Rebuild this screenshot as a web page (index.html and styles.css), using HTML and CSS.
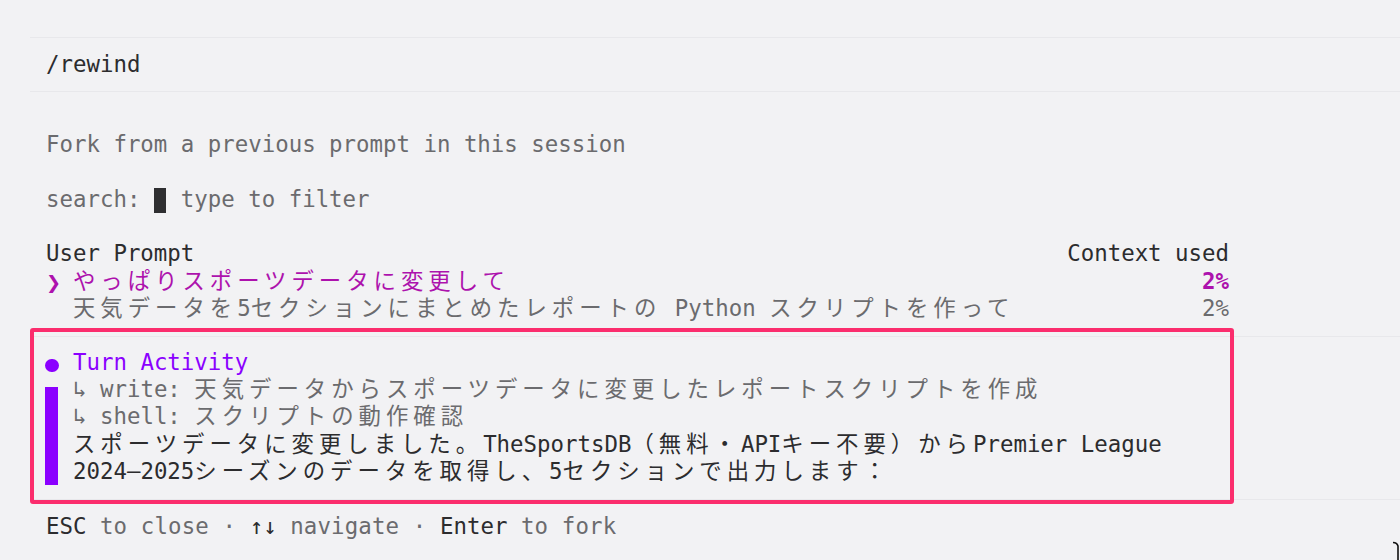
FILE: index.html
```html
<!DOCTYPE html>
<html lang="ja">
<head>
<meta charset="utf-8">
<title>/rewind</title>
<link rel="stylesheet" href="styles.css">
</head>
<body>
<main class="term">
  <section class="cmd">/rewind</section>

  <section class="picker">
    <p class="title muted">Fork from a previous prompt in this session</p>
    <p class="search muted">search: <span class="cursor"></span> type to filter</p>

    <div class="table">
      <div class="row head">
        <span>User Prompt</span>
        <span>Context used</span>
      </div>
      <div class="row sel">
        <span><span class="caret">❯</span> <span class="w">やっぱりスポーツデータに変更して</span></span>
        <span class="pct">2%</span>
      </div>
      <div class="row muted">
        <span class="indent"><span class="w">天気データを</span>5<span class="w">セクションにまとめたレポートの</span> Python <span class="w">スクリプトを作って</span></span>
        <span>2%</span>
      </div>
    </div>
  </section>

  <section class="turn">
    <div class="frame"></div>
    <div class="turn-body">
      <span class="dot"></span>
      <span class="turn-title">Turn Activity</span>
      <span class="bar"></span>
      <span class="line muted">↳ write: <span class="w">天気データからスポーツデータに変更したレポートスクリプトを作成</span></span>
      <span class="line muted">↳ shell: <span class="w">スクリプトの動作確認</span></span>
      <span class="line"><span class="w">スポーツデータに変更しました。</span>TheSportsDB<span class="w">（無料・</span>API<span class="w">キー不要）から</span>Premier League</span>
      <span class="line">2024–2025<span class="w">シーズンのデータを取得し、</span>5<span class="w">セクションで出力します：</span></span>
    </div>
  </section>

  <footer class="keys"><span class="k">ESC</span> <span class="muted">to close ·</span> <span class="k">↑↓</span> <span class="muted">navigate ·</span> <span class="k">Enter</span> <span class="muted">to fork</span></footer>
</main>
<svg class="pointer" width="10" height="20" viewBox="0 0 10 20" aria-hidden="true">
  <path d="M1 2.5 Q5 2.5 6 6 V20" fill="none" stroke="#111" stroke-width="1.6"/>
</svg>
</body>
</html>
```

FILE: styles.css
```css
html, body {
  margin: 0;
  padding: 0;
  background: #f2f2f4;
}

body {
  position: relative;
  width: 1400px;
  height: 560px;
  overflow: hidden;
  font-family: "DejaVu Sans Mono", "Noto Sans CJK JP", monospace;
  font-size: 22.4px;
  line-height: 27.3px;
  color: #2c2c2e;
  white-space: nowrap;
}

.term {
  padding-top: 37px;
}

.muted {
  color: #6b6b6e;
}

.w {
  font-family: "Noto Sans CJK JP", sans-serif;
  letter-spacing: 4.98px;
  line-height: 1;
}

.cmd {
  margin-left: 30px;
  padding: 13px 0 13px 16px;
  border-top: 1px solid #e8e8eb;
  border-bottom: 1px solid #e8e8eb;
}

.picker {
  padding-left: 46px;
}

.picker p {
  margin: 0;
  height: 27.3px;
}

.picker .title {
  margin-top: 39px;
}

.picker .search {
  margin-top: 27.5px;
}

.cursor {
  display: inline-block;
  vertical-align: top;
  width: 12px;
  height: 25px;
  margin-top: 1.5px;
  margin-right: 1.5px;
  background: #2f2f31;
}

.table {
  margin-top: 26.7px;
  width: 1183px;
}

.row {
  display: flex;
  justify-content: space-between;
  height: 27.5px;
}

.sel {
  color: #ad12ad;
}

.caret {
  display: inline-block;
  width: 13.49px;
  font-family: "DejaVu Sans", sans-serif;
  font-weight: bold;
  font-size: 18px;
  line-height: 1;
}

.pct {
  font-weight: bold;
}

.indent {
  padding-left: 27px;
}

.turn {
  position: relative;
  margin-top: 13.6px;
  margin-left: 30px;
  padding: 11.5px 0 14px 15px;
  border-top: 1px solid #e8e8eb;
  border-bottom: 1px solid #e8e8eb;
}

.frame {
  position: absolute;
  left: 0;
  top: -9px;
  width: 1204px;
  height: 176px;
  box-sizing: border-box;
  border: 4px solid #fb2d6d;
  border-radius: 3px;
}

.turn-body {
  display: grid;
  grid-template-columns: 28px 1fr;
  grid-auto-rows: 27.3px;
}

.dot {
  align-self: center;
  width: 13.5px;
  height: 13.5px;
  margin-top: 6px;
  border-radius: 50%;
  background: #8b00ff;
}

.turn-title {
  color: #8b00ff;
}

.bar {
  grid-column: 1;
  grid-row: 2 / 6;
  width: 13px;
  margin-top: 11px;
  background: #8b00ff;
}

.line {
  grid-column: 2;
}

.keys {
  margin-top: 12.5px;
  padding-left: 46px;
}

.keys .muted {
  letter-spacing: 0.15px;
}

.k {
  color: #2c2c2e;
}

.pointer {
  position: absolute;
  left: 1392px;
  top: 540px;
}
```
